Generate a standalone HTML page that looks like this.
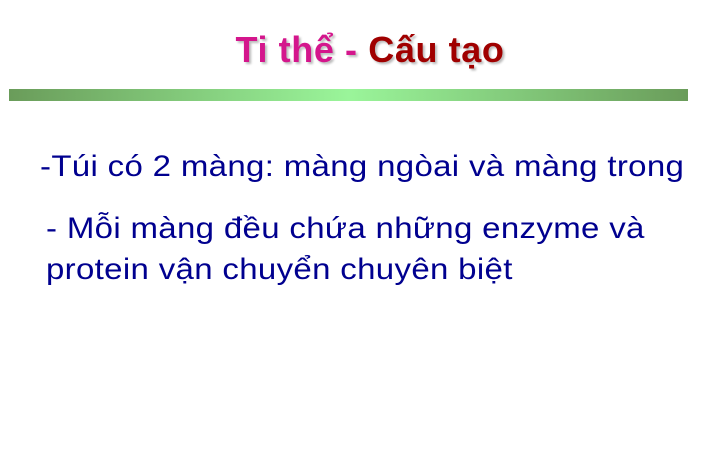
<!DOCTYPE html>
<html><head><style>
body{margin:0;width:703px;height:462px;background:#fff;position:relative;overflow:hidden;font-family:"Liberation Sans",sans-serif}
.t{position:absolute;top:29px;left:0;width:740px;text-align:center;font-weight:bold;font-size:36px;letter-spacing:0.6px;text-shadow:2px 2px 2px #bbb}
.bar{position:absolute;left:9px;top:89px;width:679px;height:12px;background:linear-gradient(90deg,#6a9c5a,#9af59a 50%,#6a9c5a)}
.p{position:absolute;color:#00008f;font-size:30px;letter-spacing:0.3px;white-space:nowrap;transform:scaleX(1.1);transform-origin:0 0}
</style></head><body>
<div class="t"><span style="color:#d4168c">Ti thể - </span><span style="color:#a00000">Cấu tạo</span></div>
<div class="bar"></div>
<div class="p" style="left:40px;top:150px">-Túi có 2 màng: màng ngòai và màng trong</div>
<div class="p" style="left:46px;top:212px">- Mỗi màng đều chứa những enzyme và</div>
<div class="p" style="left:46px;top:253px">protein vận chuyển chuyên biệt</div>
</body></html>
